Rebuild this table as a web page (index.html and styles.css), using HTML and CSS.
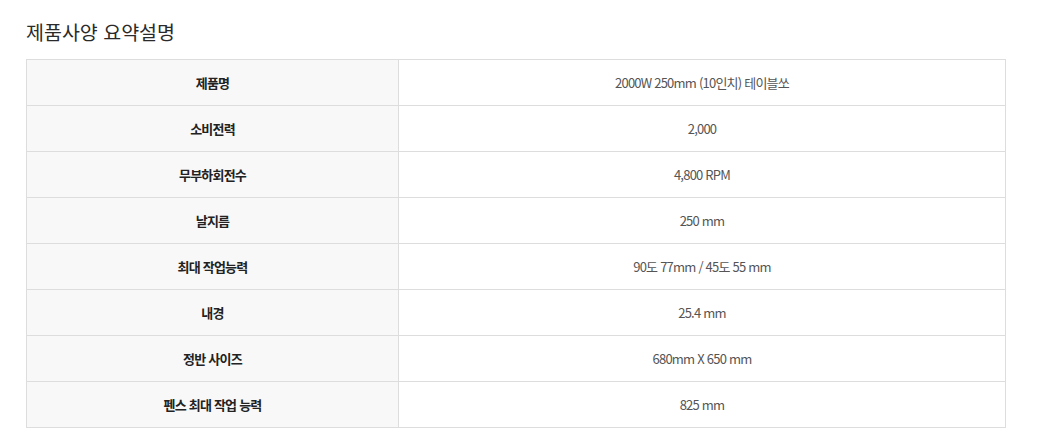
FILE: index.html
```html
<!DOCTYPE html>
<html lang="ko">
<head>
<meta charset="utf-8">
<link rel="stylesheet" href="styles.css">
</head>
<body>
<div class="wrap">
  <h2 class="title">제품사양 요약설명</h2>
  <table class="spec">
    <tr><th>제품명</th><td>2000W 250mm (10인치) 테이블쏘</td></tr>
    <tr><th>소비전력</th><td>2,000</td></tr>
    <tr><th>무부하회전수</th><td>4,800 RPM</td></tr>
    <tr><th>날지름</th><td>250 mm</td></tr>
    <tr><th>최대 작업능력</th><td>90도 77mm / 45도 55 mm</td></tr>
    <tr><th>내경</th><td>25.4 mm</td></tr>
    <tr><th>정반 사이즈</th><td>680mm X 650 mm</td></tr>
    <tr><th>펜스 최대 작업 능력</th><td>825 mm</td></tr>
  </table>
</div>
</body>
</html>
```
FILE: styles.css
```css
html, body {
  margin: 0;
  padding: 0;
  background: #fff;
}
.wrap {
  padding: 20px 31px 0 26px;
  font-family: "Noto Sans CJK KR", "Noto Sans", sans-serif;
}
.title {
  margin: 0 0 15px 0;
  font-size: 19.5px;
  font-weight: 400;
  line-height: 24px;
  color: #2a2a2a;
}
.spec {
  width: 980px;
  border-collapse: collapse;
  border: 1px solid #ddd;
  table-layout: fixed;
}
.spec th, .spec td {
  height: 45px;
  padding: 0;
  border: 1px solid #ddd;
  text-align: center;
  vertical-align: middle;
  font-size: 13px;
  letter-spacing: -0.06em;
}
.spec th {
  width: 371px;
  background: #f8f8f8;
  color: #222;
  font-weight: 700;
}
.spec td {
  background: #fff;
  color: #555;
  font-weight: 400;
}
```
